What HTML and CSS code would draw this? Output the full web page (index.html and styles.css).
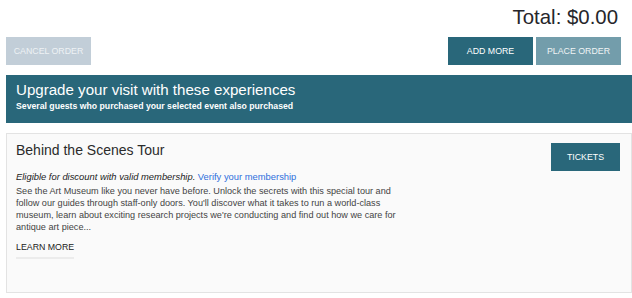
FILE: index.html
```html
<!DOCTYPE html>
<html lang="en">
<head>
    <meta charset="UTF-8">
    <meta name="viewport" content="width=device-width, initial-scale=1.0">
    <title>Checkout</title>
    <link rel="stylesheet" href="styles.css">
</head>
<body>
    <div class="checkout">
        <div class="total">Total: $0.00</div>

        <div class="actions">
            <button type="button" class="btn btn-cancel">Cancel Order</button>
            <button type="button" class="btn btn-add">Add More</button>
            <button type="button" class="btn btn-place">Place Order</button>
        </div>

        <div class="upsell">
            <h2>Upgrade your visit with these experiences</h2>
            <p>Several guests who purchased your selected event also purchased</p>
        </div>

        <div class="event-card">
            <div class="event-head">
                <h3>Behind the Scenes Tour</h3>
                <button type="button" class="btn btn-tickets">Tickets</button>
            </div>
            <p class="discount"><em>Eligible for discount with valid membership.</em> <a href="#">Verify your membership</a></p>
            <p class="desc">See the Art Museum like you never have before. Unlock the secrets with this special tour and follow our guides through staff-only doors. You'll discover what it takes to run a world-class museum, learn about exciting research projects we're conducting and find out how we care for antique art piece...</p>
            <a href="#" class="learn-more">Learn More</a>
        </div>
    </div>
</body>
</html>
```

FILE: styles.css
```css
body {
    margin: 0;
    font-family: "Liberation Sans", Arial, sans-serif;
    color: #333;
    background: #fff;
}
.checkout {
    padding-left: 6px;
}
.total {
    text-align: right;
    font-size: 20.4px;
    line-height: 24px;
    padding-top: 5px;
    padding-right: 14px;
    color: #26262a;
}
.actions {
    display: flex;
    gap: 3px;
    margin-top: 8px;
    padding-right: 11px;
}
.btn {
    width: 85px;
    height: 28px;
    border: none;
    padding: 0;
    font-family: inherit;
    font-size: 8.8px;
    text-transform: uppercase;
    color: #fff;
    cursor: pointer;
}
.btn-cancel {
    background: #c2ced8;
    color: #eef2f5;
}
.btn-add {
    margin-left: auto;
    background: #29677a;
}
.btn-place {
    background: #739dab;
    color: #f0f4f5;
}
.upsell {
    margin-top: 10px;
    height: 48px;
    box-sizing: border-box;
    padding: 5px 10px 0;
    background: #29677a;
    color: #fff;
}
.upsell h2 {
    margin: 0;
    font-size: 15.1px;
    font-weight: normal;
    line-height: 20px;
}
.upsell p {
    margin: 0;
    font-size: 8.7px;
    font-weight: bold;
    line-height: 13px;
}
.event-card {
    margin-top: 10px;
    min-height: 160px;
    box-sizing: border-box;
    padding: 8px 11px 0 9px;
    background: #fafafa;
    border: 1px solid #e3e3e3;
}
.event-head {
    display: flex;
    justify-content: space-between;
    align-items: flex-start;
}
.event-head h3 {
    margin: 0;
    font-size: 14px;
    font-weight: normal;
    line-height: 17px;
    color: #2b2b2b;
}
.btn-tickets {
    width: 69px;
    margin-top: 1px;
    background: #29677a;
}
.discount {
    margin: 0;
    font-size: 9.4px;
    line-height: 12px;
    color: #222;
}
.discount a {
    color: #2f6fdc;
    text-decoration: none;
}
.desc {
    margin: 2px 0 0;
    width: 395px;
    font-size: 9.15px;
    line-height: 12px;
    color: #444;
}
.learn-more {
    display: inline-block;
    margin-top: 9px;
    padding-bottom: 4px;
    border-bottom: 2px solid #ececec;
    font-size: 8.8px;
    line-height: 11px;
    text-transform: uppercase;
    color: #222;
    text-decoration: none;
}
```
